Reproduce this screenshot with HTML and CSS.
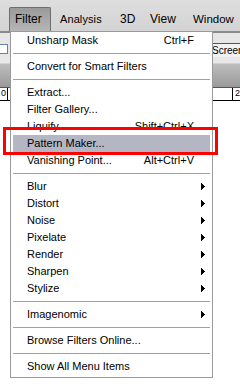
FILE: index.html
```html
<!DOCTYPE html>
<html>
<head>
<meta charset="utf-8">
<link rel="stylesheet" href="styles.css">
</head>
<body>
<div class="menubar">
  <div class="mb-item active">Filter</div>
  <div class="mb-item w-analysis">Analysis</div>
  <div class="mb-item w-3d">3D</div>
  <div class="mb-item w-view">View</div>
  <div class="mb-item w-window">Window</div>
</div>
<div class="workspace">
  <div class="optbar">
    <div class="opt-left"><span class="chk"></span></div>
    <div class="opt-right"><span class="screen-btn">Screen</span></div>
  </div>
  <div class="docbar"></div>
  <div class="ruler">
    <span class="r-left">0</span>
    <span class="r-right">2</span>
  </div>
  <div class="canvas"></div>
</div>

<div class="menu">
  <div class="mi"><span>Unsharp Mask</span><span class="sc">Ctrl+F</span></div>
  <div class="sep"></div>
  <div class="mi"><span>Convert for Smart Filters</span></div>
  <div class="sep"></div>
  <div class="mi"><span>Extract...</span></div>
  <div class="mi"><span>Filter Gallery...</span></div>
  <div class="mi"><span>Liquify...</span><span class="sc">Shift+Ctrl+X</span></div>
  <div class="mi hl"><span>Pattern Maker...</span></div>
  <div class="mi"><span>Vanishing Point...</span><span class="sc">Alt+Ctrl+V</span></div>
  <div class="sep"></div>
  <div class="mi"><span>Blur</span><svg class="arr" width="4" height="7" viewBox="0 0 4 7"><path d="M0 0h1v1h1v1h1v1h1v1h-1v1h-1v1h-1v1h-1z"/></svg></div>
  <div class="mi"><span>Distort</span><svg class="arr" width="4" height="7" viewBox="0 0 4 7"><path d="M0 0h1v1h1v1h1v1h1v1h-1v1h-1v1h-1v1h-1z"/></svg></div>
  <div class="mi"><span>Noise</span><svg class="arr" width="4" height="7" viewBox="0 0 4 7"><path d="M0 0h1v1h1v1h1v1h1v1h-1v1h-1v1h-1v1h-1z"/></svg></div>
  <div class="mi"><span>Pixelate</span><svg class="arr" width="4" height="7" viewBox="0 0 4 7"><path d="M0 0h1v1h1v1h1v1h1v1h-1v1h-1v1h-1v1h-1z"/></svg></div>
  <div class="mi"><span>Render</span><svg class="arr" width="4" height="7" viewBox="0 0 4 7"><path d="M0 0h1v1h1v1h1v1h1v1h-1v1h-1v1h-1v1h-1z"/></svg></div>
  <div class="mi"><span>Sharpen</span><svg class="arr" width="4" height="7" viewBox="0 0 4 7"><path d="M0 0h1v1h1v1h1v1h1v1h-1v1h-1v1h-1v1h-1z"/></svg></div>
  <div class="mi"><span>Stylize</span><svg class="arr" width="4" height="7" viewBox="0 0 4 7"><path d="M0 0h1v1h1v1h1v1h1v1h-1v1h-1v1h-1v1h-1z"/></svg></div>
  <div class="sep"></div>
  <div class="mi"><span>Imagenomic</span><svg class="arr" width="4" height="7" viewBox="0 0 4 7"><path d="M0 0h1v1h1v1h1v1h1v1h-1v1h-1v1h-1v1h-1z"/></svg></div>
  <div class="sep"></div>
  <div class="mi"><span>Browse Filters Online...</span></div>
  <div class="sep"></div>
  <div class="mi"><span>Show All Menu Items</span></div>
</div>

<div class="callout"></div>
</body>
</html>
```
FILE: styles.css
```css
* { box-sizing: border-box; }

body {
  margin: 0;
  width: 240px;
  height: 389px;
  overflow: hidden;
  background: #ffffff;
  font-family: "Liberation Sans", Arial, sans-serif;
  color: #000;
  position: relative;
}

.menubar {
  height: 31px;
  display: flex;
  align-items: flex-end;
  padding-left: 9px;
  background: linear-gradient(#dedede, #d3d3d3);
  white-space: nowrap;
  overflow: hidden;
}

.mb-item {
  flex: none;
  height: 24px;
  padding: 4px 0 0 8px;
  font-size: 12px;
  line-height: 14px;
  border: 1px solid transparent;
  border-bottom: 0;
}

.mb-item.active {
  width: 42px;
  padding-left: 5px;
  border-color: #6e6e6e;
  border-radius: 2px 2px 0 0;
  background: linear-gradient(#9a9a9a, #b6b6b6);
}

.w-analysis { width: 60px; font-size: 11px; letter-spacing: 0.1px; }
.w-3d { width: 30px; }
.w-view { width: 43px; }
.w-window { width: 56px; font-size: 11.5px; }

.workspace {
  display: flex;
  flex-direction: column;
}

.optbar {
  height: 26px;
  border-top: 2px solid #8a8a8a;
  background: #e6e6e6;
  display: flex;
  justify-content: space-between;
}

.opt-left {
  width: 10px;
  padding-top: 11px;
}

.chk {
  display: block;
  width: 8px;
  height: 10px;
  background: #fff;
  border: 1px solid #5f7fb5;
  border-left: 0;
}

.opt-right {
  width: 30px;
  padding-top: 10px;
}

.screen-btn {
  display: block;
  height: 15px;
  border: 1px solid #2c59a8;
  border-right: 0;
  background: #f2f2f2;
  font-size: 10px;
  line-height: 14px;
  padding-left: 1px;
  white-space: nowrap;
  overflow: hidden;
}

.docbar {
  height: 31px;
  background: linear-gradient(#e8e8e8 0, #e8e8e8 6px, #bdbdbd 7px, #9a9a9a 30px);
  border-bottom: 1px solid #555;
}

.ruler {
  height: 13px;
  background: #fff;
  border-bottom: 1px solid #000;
  display: flex;
  justify-content: space-between;
  font-size: 9px;
  line-height: 10px;
}

.r-left {
  width: 8px;
  padding-left: 1px;
  border-right: 1px solid #000;
}

.r-right {
  width: 8px;
  padding-left: 2px;
  border-left: 1px solid #000;
}

.canvas {
  flex: 1;
  background: #fff;
}

.menu {
  position: absolute;
  left: 10px;
  top: 31px;
  width: 203px;
  background: #fff;
  border: 1px solid #9a9a9a;
  padding: 0 0 2px;
  font-size: 11px;
}

.mi {
  height: 17px;
  margin: 0 2px;
  padding: 0 5px 0 14px;
  display: flex;
  align-items: center;
  line-height: 17px;
  white-space: nowrap;
}

.mi .sc {
  margin-left: auto;
  margin-right: 11px;
}

.mi .arr {
  margin-left: auto;
  display: block;
}

.mi.hl {
  background: #b4b6c3;
}

.sep {
  height: 9px;
  margin: 0 2px;
  padding-top: 4px;
}

.sep::after {
  content: "";
  display: block;
  height: 1px;
  background: #a0a0a0;
}

.callout {
  position: absolute;
  left: 3px;
  top: 127px;
  width: 215px;
  height: 28px;
  border: 3px solid #ff0000;
}
```
